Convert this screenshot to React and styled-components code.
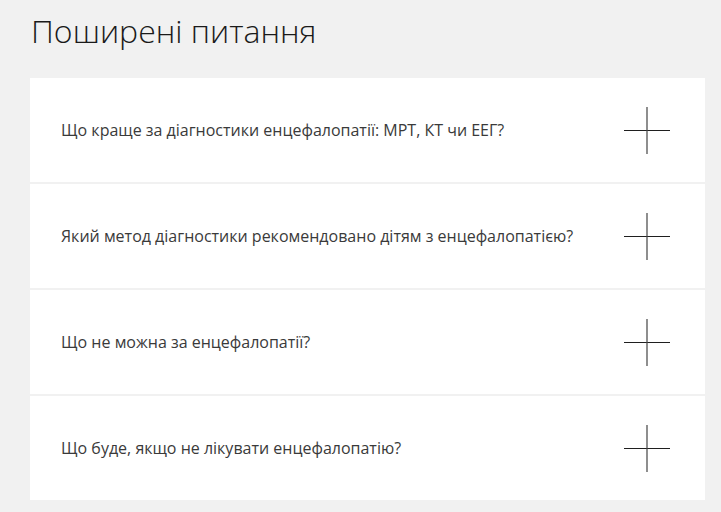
import React from "react";
import styled, { createGlobalStyle } from "styled-components";

const Global = createGlobalStyle`
  html, body { margin: 0; padding: 0; background: #f1f1f1; }
  body { font-family: "Open Sans", "Liberation Sans", sans-serif; color: #222; }
`;

const Page = styled.main`
  padding: 9px 16px 0 30px;
  width: 675px;
`;

const Title = styled.h2`
  margin: 0 0 25px 1px;
  font-family: "Open Sans", sans-serif;
  font-weight: 300;
  font-size: 32px;
  line-height: 44px;
  color: #1a1a1a;
`;

const List = styled.div`
  display: flex;
  flex-direction: column;
  gap: 2px;
`;

const Item = styled.div`
  background: #fff;
  height: 104px;
  display: flex;
  align-items: center;
  justify-content: space-between;
  padding: 0 35px 0 31px;
  box-sizing: border-box;
`;

const Question = styled.span`
  font-family: "Open Sans", sans-serif;
  font-size: 16px;
  font-weight: 400;
  color: #3a3a3a;
`;

const Plus = () => (
  <svg width="46" height="47" viewBox="0 0 46 47" aria-hidden="true">
    <line x1="0" y1="23.5" x2="46" y2="23.5" stroke="#1f1f1f" strokeWidth="1.2" />
    <line x1="23" y1="0" x2="23" y2="47" stroke="#444" strokeWidth="1.2" />
  </svg>
);

const questions = [
  "Що краще за діагностики енцефалопатії: МРТ, КТ чи ЕЕГ?",
  "Який метод діагностики рекомендовано дітям з енцефалопатією?",
  "Що не можна за енцефалопатії?",
  "Що буде, якщо не лікувати енцефалопатію?",
];

export default function App() {
  return (
    <>
      <Global />
      <Page>
        <Title>Поширені питання</Title>
        <List>
          {questions.map((q) => (
            <Item key={q}>
              <Question>{q}</Question>
              <Plus />
            </Item>
          ))}
        </List>
      </Page>
    </>
  );
}
